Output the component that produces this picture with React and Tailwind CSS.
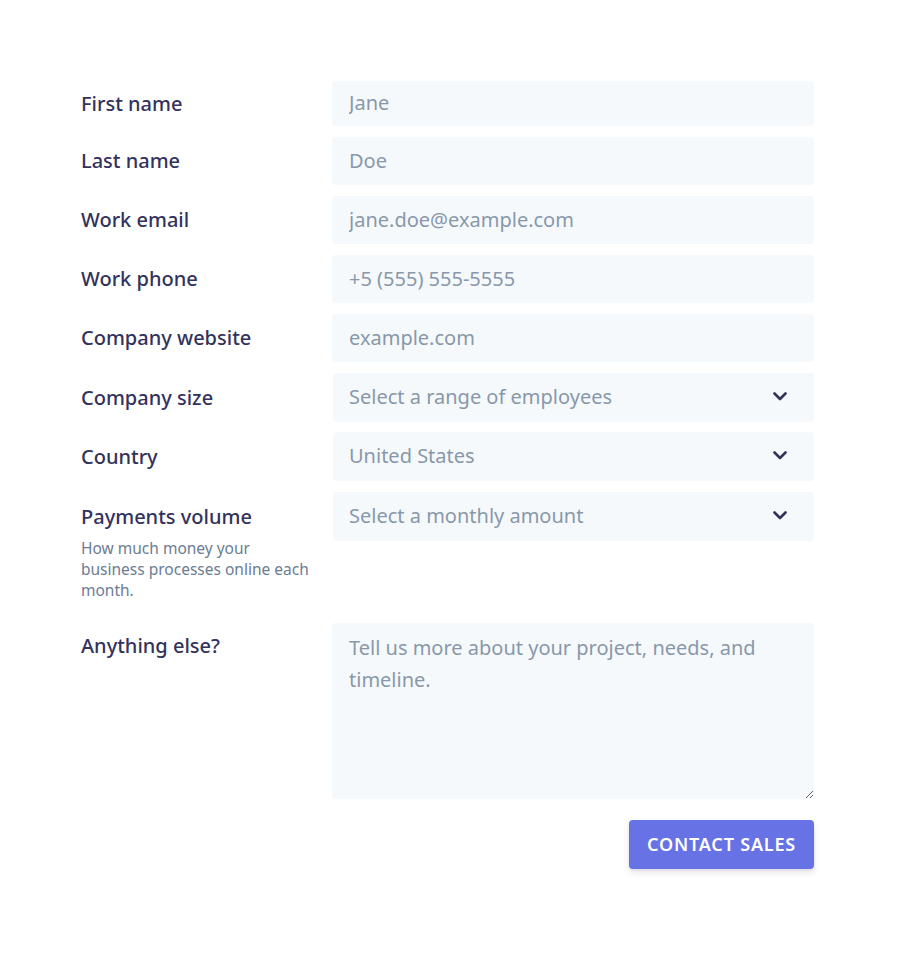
import React from 'react'

const font = { fontFamily: '"Noto Sans", "Open Sans", sans-serif' }

const fields = [
  { label: 'First name', placeholder: 'Jane', h: 'h-[45px]' },
  { label: 'Last name', placeholder: 'Doe' },
  { label: 'Work email', placeholder: 'jane.doe@example.com' },
  { label: 'Work phone', placeholder: '+5 (555) 555-5555' },
  { label: 'Company website', placeholder: 'example.com' },
]

const selects = [
  { label: 'Company size', placeholder: 'Select a range of employees', mb: 'mb-[10px]' },
  { label: 'Country', placeholder: 'United States', mb: 'mb-[11px]' },
  {
    label: 'Payments volume',
    placeholder: 'Select a monthly amount',
    hint: 'How much money your business processes online each month.',
    mb: 'mb-[22px]',
  },
]

function Chevron() {
  return (
    <svg width="14" height="9" viewBox="0 0 14 9" fill="none" className="shrink-0">
      <path d="M1.5 1.5 7 7l5.5-5.5" stroke="#32325d" strokeWidth="2.6" strokeLinecap="round" strokeLinejoin="round" />
    </svg>
  )
}

function Label({ children }) {
  return <span className="text-[20px] leading-[28px] font-[470] text-[#32325d]">{children}</span>
}

export default function App() {
  return (
    <div className="min-h-screen bg-white" style={font}>
      <form className="pt-[81px] pl-[81px] pr-[86px] flex flex-col">
        {fields.map((f) => (
          <div key={f.label} className="flex items-center mb-[11px]">
            <div className="w-[251px] shrink-0">
              <Label>{f.label}</Label>
            </div>
            <input
              placeholder={f.placeholder}
              className={`flex-1 ${f.h || 'h-[48px]'} rounded-[4px] bg-[#f6f9fc] px-[17px] pb-[2px] text-[20px] text-[#32325d] placeholder:text-[#8898aa] outline-none`}
            />
          </div>
        ))}

        {selects.map((s) => (
          <div key={s.label} className={`flex items-start ${s.mb}`}>
            <div className="w-[251px] shrink-0">
              <div className="h-[49px] flex items-center">
                <Label>{s.label}</Label>
              </div>
              {s.hint && (
                <p className="w-[232px] -mt-[3px] text-[15.5px] leading-[21px] text-[#6b7c93]">{s.hint}</p>
              )}
            </div>
            <div className="flex-1 ml-[1px] h-[49px] rounded-[4px] bg-[#f6f9fc] pl-[16px] pr-[27px] pb-[2px] flex items-center justify-between">
              <span className="text-[20px] text-[#8898aa]">{s.placeholder}</span>
              <Chevron />
            </div>
          </div>
        ))}

        <div className="flex items-start mb-[21px]">
          <div className="w-[251px] shrink-0 pt-[9px]">
            <Label>Anything else?</Label>
          </div>
          <textarea
            placeholder="Tell us more about your project, needs, and timeline."
            className="flex-1 h-[176px] rounded-[4px] bg-[#f6f9fc] px-[17px] py-[9px] text-[20px] leading-[32px] text-[#32325d] placeholder:text-[#8898aa] outline-none resize-y"
          />
        </div>

        <div className="flex justify-end">
          <button
            type="button"
            className="h-[49px] w-[185px] rounded-[4px] bg-[#6772e5] text-white text-[18px] font-semibold tracking-[0.045em] uppercase shadow-[0_4px_6px_rgba(50,50,93,0.11),0_1px_3px_rgba(0,0,0,0.08)]"
          >
            Contact sales
          </button>
        </div>
      </form>
    </div>
  )
}
